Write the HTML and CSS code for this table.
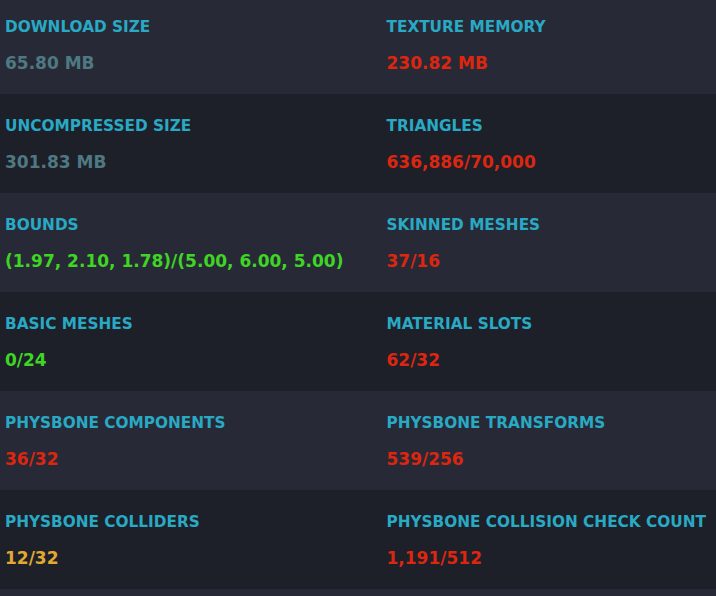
FILE: index.html
```html
<!DOCTYPE html>
<html lang="en">
<head>
<meta charset="utf-8">
<title>Performance Stats</title>
<link rel="stylesheet" href="styles.css">
</head>
<body>
<div class="stats">
  <div class="row">
    <div class="cell"><div class="label">Download Size</div><div class="value v-grey">65.80 MB</div></div>
    <div class="cell"><div class="label">Texture Memory</div><div class="value v-red">230.82 MB</div></div>
  </div>
  <div class="row">
    <div class="cell"><div class="label">Uncompressed Size</div><div class="value v-grey">301.83 MB</div></div>
    <div class="cell"><div class="label">Triangles</div><div class="value v-red">636,886/70,000</div></div>
  </div>
  <div class="row">
    <div class="cell"><div class="label">Bounds</div><div class="value v-green">(1.97, 2.10, 1.78)/(5.00, 6.00, 5.00)</div></div>
    <div class="cell"><div class="label">Skinned Meshes</div><div class="value v-red">37/16</div></div>
  </div>
  <div class="row">
    <div class="cell"><div class="label">Basic Meshes</div><div class="value v-green">0/24</div></div>
    <div class="cell"><div class="label">Material Slots</div><div class="value v-red">62/32</div></div>
  </div>
  <div class="row">
    <div class="cell"><div class="label">PhysBone Components</div><div class="value v-red">36/32</div></div>
    <div class="cell"><div class="label">PhysBone Transforms</div><div class="value v-red">539/256</div></div>
  </div>
  <div class="row">
    <div class="cell"><div class="label">PhysBone Colliders</div><div class="value v-yellow">12/32</div></div>
    <div class="cell"><div class="label">PhysBone Collision Check Count</div><div class="value v-red">1,191/512</div></div>
  </div>
</div>
</body>
</html>
```

FILE: styles.css
```css
html, body {
  margin: 0;
  padding: 0;
}
body {
  background: #272a36;
  font-family: "DejaVu Sans", Verdana, sans-serif;
  font-weight: bold;
  overflow: hidden;
}
.stats {
  margin-top: -5px;
  display: flex;
  flex-direction: column;
}
.row {
  display: grid;
  grid-template-columns: 381.5px 1fr;
  height: 99px;
  box-sizing: border-box;
}
.row:nth-child(odd) {
  background: #272a36;
}
.row:nth-child(even) {
  background: #1d2029;
}
.cell {
  padding: 22px 0 0 5px;
  white-space: nowrap;
}
.label {
  font-size: 15.3px;
  line-height: 20px;
  color: #29a9c4;
  text-transform: uppercase;
}
.value {
  margin-top: 15px;
  font-size: 17px;
  line-height: 22px;
}
.v-grey { color: #4f7982; }
.v-red { color: #dc2610; }
.v-green { color: #3fd525; }
.v-yellow { color: #e1a832; }
```
